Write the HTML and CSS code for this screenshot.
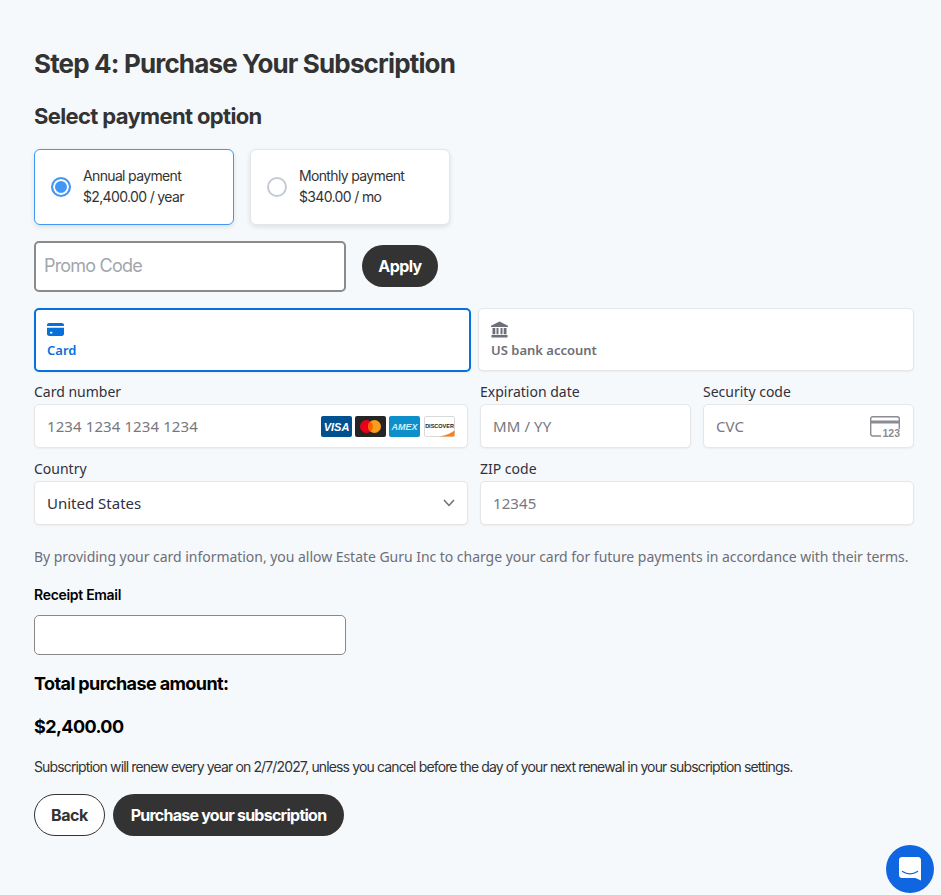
FILE: index.html
```html
<!DOCTYPE html>
<html lang="en">
<head>
    <meta charset="UTF-8">
    <meta name="viewport" content="width=device-width, initial-scale=1.0">
    <title>Purchase Your Subscription</title>
    <link rel="stylesheet" href="styles.css">
</head>
<body>
    <div class="page">
        <h1>Step 4: Purchase Your Subscription</h1>
        <h2>Select payment option</h2>

        <div class="plans">
            <div class="plan plan-active">
                <span class="radio radio-on"></span>
                <div class="plan-text">
                    <div>Annual payment</div>
                    <div>$2,400.00 / year</div>
                </div>
            </div>
            <div class="plan">
                <span class="radio"></span>
                <div class="plan-text">
                    <div>Monthly payment</div>
                    <div>$340.00 / mo</div>
                </div>
            </div>
        </div>

        <div class="promo">
            <div class="promo-input">Promo Code</div>
            <button class="btn btn-dark btn-apply">Apply</button>
        </div>

        <div class="tabs">
            <div class="tab tab-active">
                <svg class="tab-icon" viewBox="0 0 17 13" width="17" height="13">
                    <path fill="#0570de" d="M0 2.2C0 .9.9 0 2.2 0h12.600C16.100 0 17 .9 17 2.200V3H0zM0 4.800h17v6c0 1.300-.9 2.200-2.200 2.200H2.200C.9 13 0 12.100 0 10.800z"/>
                    <rect x="3" y="8.800" width="2.400" height="1.800" rx=".6" fill="#fff"/>
                </svg>
                <div>Card</div>
            </div>
            <div class="tab">
                <svg class="tab-icon" viewBox="0 0 17 16" width="17" height="16">
                    <path fill="#6d6e78" d="M8.500 0 17 4.200V5.500H0V4.200zM1.500 6.500h2.800v6.300H1.500zM5.500 6.500h2v6.300h-2zM9.500 6.500h2v6.300h-2zM12.700 6.500h2.800v6.300h-2.800zM.5 13.500h16V16H.5z"/>
                </svg>
                <div>US bank account</div>
            </div>
        </div>

        <div class="field-grid">
            <div class="field field-number">
                <label>Card number</label>
                <div class="input">
                    <span class="hint">1234 1234 1234 1234</span>
                    <span class="brands">
                        <svg viewBox="0 0 31 21" width="31" height="21">
                            <rect width="31" height="21" rx="2" fill="#01508f"/>
                            <text x="15.500" y="14.800" class="visa-text">VISA</text>
                        </svg>
                        <svg viewBox="0 0 31 21" width="31" height="21">
                            <rect width="31" height="21" rx="2" fill="#252525"/>
                            <circle cx="11.500" cy="10.500" r="6.500" fill="#eb001b"/>
                            <circle cx="19.500" cy="10.500" r="6.500" fill="#f79e1b"/>
                            <path d="M15.500 5.400a6.500 6.500 0 0 1 0 10.200 6.500 6.500 0 0 1 0-10.200z" fill="#ff5f00"/>
                        </svg>
                        <svg viewBox="0 0 31 21" width="31" height="21">
                            <rect width="31" height="21" rx="2" fill="#0d90c9"/>
                            <text x="15.500" y="13.800" class="amex-text">AMEX</text>
                        </svg>
                        <svg class="brand-discover" viewBox="0 0 31 21" width="31" height="21">
                            <rect x=".5" y=".5" width="30" height="20" rx="1.500" fill="#fff" stroke="#d9d9d9"/>
                            <path d="M15 20.500c7-1 11.500-3 15.500-6v5c0 .8-.7 1-1.500 1z" fill="#f58220"/>
                            <text x="15.500" y="12.300" class="disc-text">DISCOVER</text>
                        </svg>
                    </span>
                </div>
            </div>
            <div class="field field-exp">
                <label>Expiration date</label>
                <div class="input"><span class="hint">MM / YY</span></div>
            </div>
            <div class="field field-cvc">
                <label>Security code</label>
                <div class="input">
                    <span class="hint">CVC</span>
                    <svg class="cvc-icon" viewBox="0 0 30 21" width="30" height="21">
                        <path fill="none" stroke="#8b8b94" stroke-width="1.400" d="M11 20H3c-1.300 0-2.300-1-2.300-2.300V3C.7 1.700 1.700.7 3 .7h24c1.300 0 2.300 1 2.300 2.300v10"/>
                        <rect x="1" y="4.500" width="28" height="3" fill="#8b8b94"/>
                        <text x="30" y="20.500" class="cvc-text">123</text>
                    </svg>
                </div>
            </div>
            <div class="field field-country">
                <label>Country</label>
                <div class="input input-text">
                    <span>United States</span>
                    <svg viewBox="0 0 12 8" width="12" height="8">
                        <path d="M1 1l5 5.500L11 1" fill="none" stroke="#6d6e78" stroke-width="1.500"/>
                    </svg>
                </div>
            </div>
            <div class="field field-zip">
                <label>ZIP code</label>
                <div class="input"><span class="hint">12345</span></div>
            </div>
        </div>

        <p class="terms">By providing your card information, you allow Estate Guru Inc to charge your card for future payments in accordance with their terms.</p>

        <div class="receipt-label">Receipt Email</div>
        <div class="receipt-input"></div>

        <div class="total-label">Total purchase amount:</div>
        <div class="total-amount">$2,400.00</div>
        <p class="renew">Subscription will renew every year on 2/7/2027, unless you cancel before the day of your next renewal in your subscription settings.</p>

        <div class="actions">
            <button class="btn btn-back">Back</button>
            <button class="btn btn-dark btn-purchase">Purchase your subscription</button>
        </div>
    </div>

    <!-- chat launcher sits over the page corner -->
    <div class="chat">
        <svg viewBox="0 0 22 24" width="22" height="24">
            <path fill="#fff" d="M3 0h16c1.700 0 3 1.300 3 3v20.500l-5.500-2.500H3c-1.700 0-3-1.300-3-3V3c0-1.700 1.300-3 3-3z"/>
            <path fill="none" stroke="#0f66e0" stroke-width="1.400" stroke-linecap="round" d="M3.500 14.500c4.500 3 10.500 3 15 0"/>
        </svg>
    </div>
</body>
</html>
```
FILE: styles.css
```css
* { box-sizing: border-box; }

body {
    margin: 0;
    background: #f6f9fc;
    font-family: Inter, "Liberation Sans", sans-serif;
    color: #333;
}

.page {
    width: 941px;
    height: 895px;
    padding: 48px 27px 0 34px;
    overflow: hidden;
}

h1 {
    margin: 0;
    height: 32px;
    font-size: 26px;
    line-height: 32px;
    font-weight: 700;
    letter-spacing: -0.85px;
}

h2 {
    margin: 24px 0 0;
    height: 24px;
    font-size: 22px;
    line-height: 24px;
    font-weight: 700;
    letter-spacing: -0.65px;
}

.plans { display: flex; gap: 16px; margin-top: 21px; }

.plan {
    width: 200px;
    height: 76px;
    display: flex;
    align-items: center;
    gap: 12px;
    padding: 0 16px;
    background: white;
    border: 1px solid #e3e6ea;
    border-radius: 6px;
    box-shadow: 0 2px 5px rgba(0,0,0,0.1);
}

.plan-active { border-color: #4296f5; }

.radio {
    flex: none;
    width: 20px;
    height: 20px;
    border: 2px solid #c4cbd3;
    border-radius: 50%;
    background: white;
}

.radio-on { border-color: #4296f5; background: #4296f5; box-shadow: inset 0 0 0 2px white; }

.plan-text {
    margin-top: -2px;
    font-size: 14px;
    line-height: 21px;
    letter-spacing: -0.65px;
    color: #333;
}

.promo { display: flex; align-items: flex-start; gap: 16px; margin-top: 16px; }

.promo-input {
    width: 312px;
    height: 51px;
    padding: 0 8px 3px;
    display: flex;
    align-items: center;
    background: white;
    border: 2px solid #8a8a8a;
    border-radius: 5px;
    font-size: 18px;
    letter-spacing: -0.8px;
    color: #a3a6ae;
}

.btn {
    height: 42px;
    border: none;
    border-radius: 21px;
    padding: 0;
    font-family: inherit;
    font-size: 16px;
    font-weight: 700;
    cursor: pointer;
}

.btn-dark { background: #333; color: white; }
.btn-apply { width: 76px; margin-top: 4px; letter-spacing: -0.6px; }

.tabs { display: flex; gap: 7px; margin-top: 16px; }

.tab {
    width: 436px;
    height: 63px;
    padding: 12px 12px 0;
    background: white;
    border: 1px solid #e6e6e6;
    border-radius: 5px;
    box-shadow: 0 1px 2px rgba(0,0,0,0.05);
    font-family: "Noto Sans", "Open Sans", sans-serif;
    font-size: 13px;
    font-weight: 600;
    line-height: 18px;
    color: #6d6e78;
}

.tab-active {
    width: 437px;
    height: 64px;
    padding: 11px 11px 0;
    border: 2px solid #0570de;
    color: #0570de;
}

.tab-icon { display: block; height: 17px; margin-bottom: 3px; }

.field-grid {
    display: grid;
    grid-template-columns: 434px 211px 211px;
    column-gap: 12px;
    row-gap: 11px;
    margin-top: 10px;
    font-family: "Noto Sans", "Open Sans", sans-serif;
}

.field-country { grid-column: 1; }
.field-zip { grid-column: 2 / 4; }

.field label {
    display: block;
    height: 22px;
    font-size: 14px;
    line-height: 20px;
    color: #30313d;
}

.input {
    height: 44px;
    padding: 0 12px;
    display: flex;
    align-items: center;
    justify-content: space-between;
    background: white;
    border: 1px solid #e6e6e6;
    border-radius: 5px;
    box-shadow: 0 1px 2px rgba(0,0,0,0.05);
    font-size: 15px;
}

.hint { color: #77787f; letter-spacing: 0.1px; }
.input-text { color: #30313d; }

.brands { display: flex; gap: 3px; }
.brands svg { display: block; }
.brands .brand-discover { margin-left: 1px; }

.visa-text {
    font: italic 700 11px "Liberation Sans", sans-serif;
    fill: white;
    text-anchor: middle;
}

.amex-text {
    font: italic 700 9px "Liberation Sans", sans-serif;
    fill: #cfeefa;
    text-anchor: middle;
}

.disc-text {
    font: 700 5.500px "Liberation Sans", sans-serif;
    fill: #222;
    text-anchor: middle;
}

.cvc-icon { display: block; margin-right: 1px; }

.cvc-text {
    font: 700 10.500px "Liberation Sans", sans-serif;
    fill: #8b8b94;
    text-anchor: end;
}

.terms {
    margin: 22px 0 0;
    font-family: "Noto Sans", "Open Sans", sans-serif;
    font-size: 14px;
    line-height: 20px;
    letter-spacing: -0.035px;
    color: #6d6e78;
    white-space: nowrap;
}

.receipt-label {
    margin-top: 19px;
    font-size: 14px;
    line-height: 18px;
    font-weight: 600;
    letter-spacing: -0.3px;
    color: black;
}

.receipt-input {
    width: 312px;
    height: 40px;
    margin-top: 11px;
    background: white;
    border: 1px solid #888;
    border-radius: 5px;
}

.total-label {
    margin-top: 18px;
    font-size: 18px;
    line-height: 22px;
    font-weight: 700;
    letter-spacing: -0.6px;
    color: black;
}

.total-amount {
    margin-top: 21px;
    font-size: 18px;
    line-height: 22px;
    font-weight: 700;
    letter-spacing: -0.6px;
    color: black;
}

.renew {
    margin: 20px 0 0;
    font-size: 14px;
    line-height: 18px;
    letter-spacing: -0.86px;
    color: #333;
    white-space: nowrap;
}

.actions { display: flex; gap: 8px; margin-top: 18px; }

.btn-back {
    width: 71px;
    background: white;
    border: 1px solid #333;
    color: #333;
    letter-spacing: -0.4px;
}

.btn-purchase { width: 231px; letter-spacing: -0.75px; }

.chat {
    position: fixed;
    right: 7px;
    bottom: 2px;
    width: 48px;
    height: 48px;
    display: flex;
    align-items: center;
    justify-content: center;
    border-radius: 50%;
    background: #0f66e0;
}
```
